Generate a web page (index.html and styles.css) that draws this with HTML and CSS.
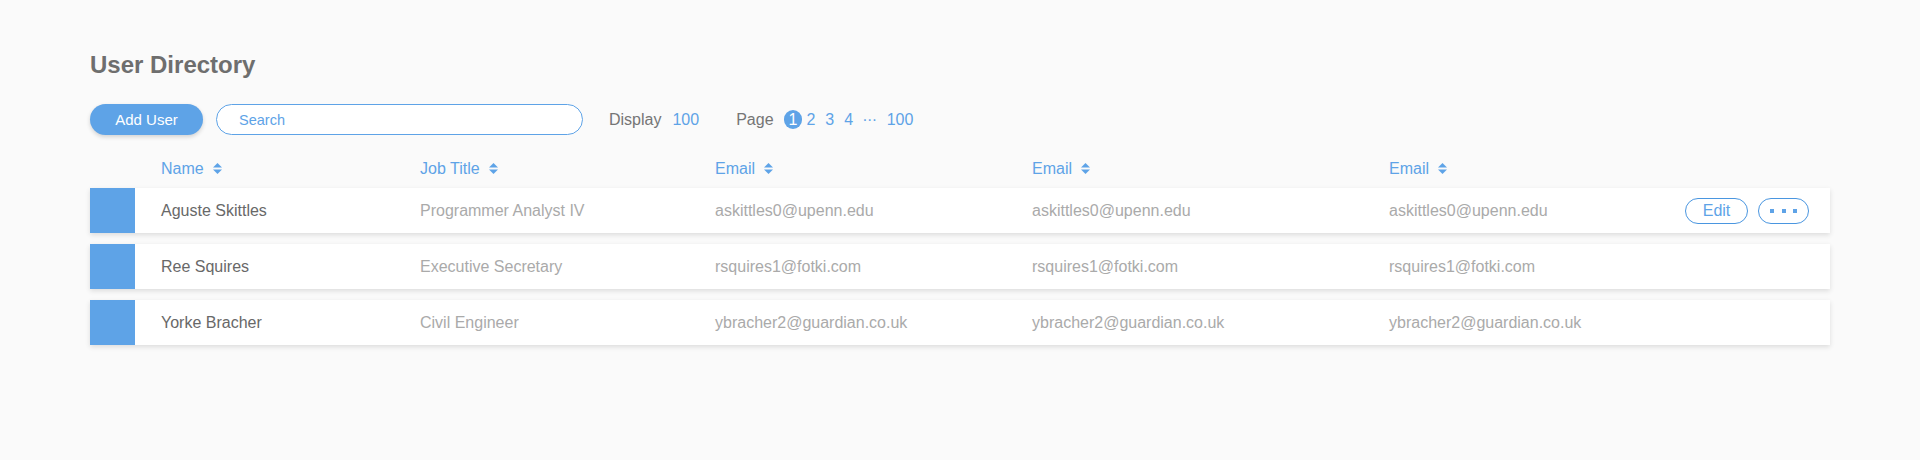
FILE: index.html
```html
<!DOCTYPE html>
<html lang="en">
<head>
<meta charset="utf-8">
<title>User Directory</title>
<link rel="stylesheet" href="styles.css">
</head>
<body>
<div class="page">
  <h1 class="title">User Directory</h1>
  <div class="toolbar">
    <button class="btn-primary">Add User</button>
    <input class="search" type="text" placeholder="Search">
    <div class="display">
      <span class="label">Display</span>
      <span class="link">100</span>
    </div>
    <div class="pager">
      <span class="label">Page</span>
      <span class="pages">
        <span class="pg active">1</span><span class="pg">2</span><span class="pg">3</span><span class="pg">4</span><span class="pg ellipsis">···</span><span class="pg">100</span>
      </span>
    </div>
  </div>

  <div class="header">
    <div class="hcell">Name <svg class="sort" width="9" height="11" viewBox="0 0 9 11"><polygon points="0,4.6 4.5,0 9,4.6"/><polygon points="0,6.4 4.5,11 9,6.4"/></svg></div>
    <div class="hcell">Job Title <svg class="sort" width="9" height="11" viewBox="0 0 9 11"><polygon points="0,4.6 4.5,0 9,4.6"/><polygon points="0,6.4 4.5,11 9,6.4"/></svg></div>
    <div class="hcell">Email <svg class="sort" width="9" height="11" viewBox="0 0 9 11"><polygon points="0,4.6 4.5,0 9,4.6"/><polygon points="0,6.4 4.5,11 9,6.4"/></svg></div>
    <div class="hcell">Email <svg class="sort" width="9" height="11" viewBox="0 0 9 11"><polygon points="0,4.6 4.5,0 9,4.6"/><polygon points="0,6.4 4.5,11 9,6.4"/></svg></div>
    <div class="hcell">Email <svg class="sort" width="9" height="11" viewBox="0 0 9 11"><polygon points="0,4.6 4.5,0 9,4.6"/><polygon points="0,6.4 4.5,11 9,6.4"/></svg></div>
    <div></div>
  </div>

  <div class="row">
    <div class="avatar"></div>
    <div class="cells">
      <div class="name">Aguste Skittles</div>
      <div class="muted">Programmer Analyst IV</div>
      <div class="muted">askittles0@upenn.edu</div>
      <div class="muted">askittles0@upenn.edu</div>
      <div class="muted">askittles0@upenn.edu</div>
      <div class="actions">
        <button class="btn-outline edit">Edit</button>
        <button class="btn-outline more"><span class="dot"></span><span class="dot"></span><span class="dot"></span></button>
      </div>
    </div>
  </div>

  <div class="row">
    <div class="avatar"></div>
    <div class="cells">
      <div class="name">Ree Squires</div>
      <div class="muted">Executive Secretary</div>
      <div class="muted">rsquires1@fotki.com</div>
      <div class="muted">rsquires1@fotki.com</div>
      <div class="muted">rsquires1@fotki.com</div>
      <div class="actions"></div>
    </div>
  </div>

  <div class="row">
    <div class="avatar"></div>
    <div class="cells">
      <div class="name">Yorke Bracher</div>
      <div class="muted">Civil Engineer</div>
      <div class="muted">ybracher2@guardian.co.uk</div>
      <div class="muted">ybracher2@guardian.co.uk</div>
      <div class="muted">ybracher2@guardian.co.uk</div>
      <div class="actions"></div>
    </div>
  </div>
</div>
</body>
</html>
```
FILE: styles.css
```css
* { box-sizing: border-box; }

body {
  margin: 0;
  background: #fafafa;
  font-family: "Liberation Sans", Helvetica, Arial, sans-serif;
  color: #6f6f6f;
}

.page {
  padding: 51px 90px 40px;
}

.title {
  margin: 0;
  font-size: 24px;
  line-height: 28px;
  font-weight: bold;
  color: #6e6e6e;
}

.toolbar {
  margin-top: 25px;
  height: 31px;
  display: flex;
  align-items: center;
}

.btn-primary {
  width: 113px;
  height: 31px;
  border: none;
  border-radius: 16px;
  background: #5ea3e7;
  color: #ffffff;
  font-family: inherit;
  font-size: 15px;
  box-shadow: 0 2px 4px rgba(0, 0, 0, 0.16);
  padding: 0;
}

.search {
  margin-left: 13px;
  width: 367px;
  height: 31px;
  border: 1px solid #5ea3e7;
  border-radius: 16px;
  background: #ffffff;
  padding: 0 0 0 22px;
  font-family: inherit;
  font-size: 14.5px;
  color: #5ea3e7;
  outline: none;
}

.search::placeholder { color: #5ea3e7; }

.display {
  margin-left: 26px;
  display: flex;
  align-items: center;
  font-size: 16px;
}

.label { color: #757575; }

.link {
  color: #5ea3e7;
  margin-left: 11px;
}

.pager {
  margin-left: 37px;
  display: flex;
  align-items: center;
  font-size: 16px;
}

.pages {
  margin-left: 10px;
  display: flex;
  align-items: center;
}

.pg {
  display: inline-block;
  height: 19px;
  line-height: 19px;
  padding: 0 5px;
  border-radius: 10px;
  color: #5ea3e7;
}

.pg.active {
  background: #5ea3e7;
  color: #ffffff;
  margin-right: -1px;
}

.pg.ellipsis {
  letter-spacing: -0.5px;
  padding: 0 5px 0 4px;
}

.header {
  margin-top: 24px;
  margin-bottom: 9px;
  margin-left: 45px;
  padding-left: 26px;
  display: grid;
  grid-template-columns: 259px 295px 317px 357px 1fr auto;
  font-size: 16px;
  line-height: 20px;
  color: #5ea3e7;
}

.hcell { white-space: nowrap; }

.sort {
  fill: #5ea3e7;
  margin-left: 5px;
  vertical-align: 0;
}

.row {
  display: flex;
  height: 45px;
  margin-bottom: 11px;
  background: #ffffff;
  box-shadow: 0 2px 5px rgba(0, 0, 0, 0.12);
}

.avatar {
  width: 45px;
  flex: none;
  background: #5ea3e7;
}

.cells {
  flex: 1;
  display: grid;
  grid-template-columns: 259px 295px 317px 357px 1fr auto;
  align-items: center;
  padding: 0 21px 0 26px;
  font-size: 16px;
  line-height: 20px;
  white-space: nowrap;
}

.name { color: #686868; }
.muted { color: #aaaaaa; }

.actions {
  display: flex;
  gap: 10px;
}

.btn-outline {
  height: 26px;
  border: 1px solid #4a96e0;
  border-radius: 13px;
  background: #ffffff;
  color: #5ea3e7;
  font-family: inherit;
  font-size: 16px;
  padding: 0;
}

.edit { width: 63px; }

.more {
  width: 51px;
  display: flex;
  align-items: center;
  justify-content: center;
  gap: 7.5px;
}

.dot {
  width: 4px;
  height: 4px;
  background: #5ea3e7;
}
```
